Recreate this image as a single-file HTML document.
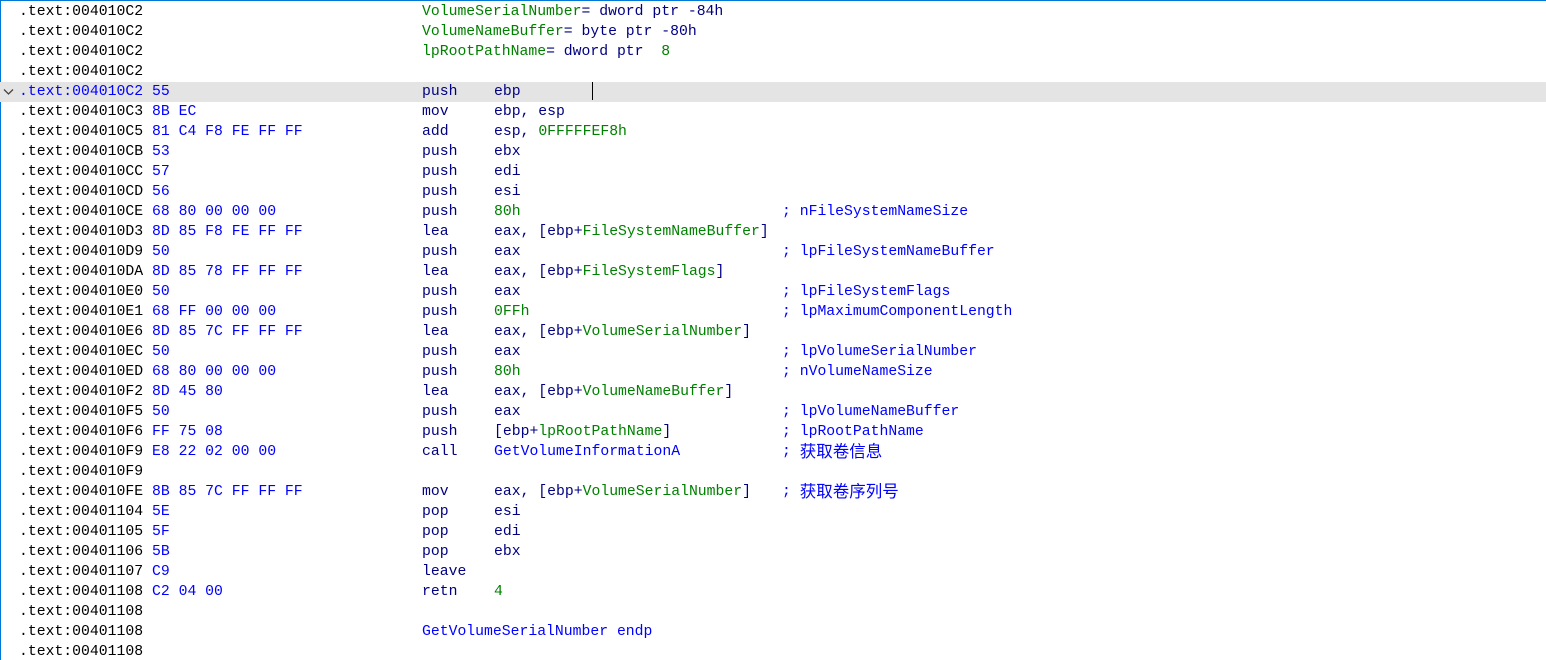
<!DOCTYPE html>
<html><head><meta charset="utf-8"><style>
html,body{margin:0;padding:0;background:#fff;width:1546px;height:660px;overflow:hidden}
body{position:relative;font-family:"Liberation Mono","Noto Sans CJK SC",monospace;font-size:14.78px}
.frame{position:absolute;left:0;top:0;width:1546px;height:660px;border-top:1px solid #0078d7;border-left:1px solid #0078d7;box-sizing:border-box}
.r{position:absolute;left:0;width:1546px;height:20px;line-height:20px;white-space:pre}
.r span{position:absolute;top:0}
.a{left:19px;color:#000}
.b{left:152px;color:#0000ff}
.m{left:422px;color:#000080}
.o{left:494px;color:#000080}
.c{left:782px;color:#0000ff}
.g{color:#008000}
.cj{position:relative!important;top:-2px!important;font-family:"Noto Sans CJK SC",sans-serif;font-size:16.5px;line-height:20px;vertical-align:top}
.hl{background:#e4e4e4}
.hl .a{color:#0000ff}
</style></head><body>
<div class="frame"></div>
<div class="r" style="top:2px"><span class="a">.text:004010C2</span><span class="m"><span style="position:static" class="g">VolumeSerialNumber</span>= dword ptr -84h</span></div>
<div class="r" style="top:22px"><span class="a">.text:004010C2</span><span class="m"><span style="position:static" class="g">VolumeNameBuffer</span>= byte ptr -80h</span></div>
<div class="r" style="top:42px"><span class="a">.text:004010C2</span><span class="m"><span style="position:static" class="g">lpRootPathName</span>= dword ptr  <span style="position:static" class="g">8</span></span></div>
<div class="r" style="top:62px"><span class="a">.text:004010C2</span></div>
<div class="r hl" style="top:82px"><svg style="position:absolute;left:3px;top:6px" width="11" height="8" viewBox="0 0 11 8"><path d="M1 1.5 L5.5 6 L10 1.5" fill="none" stroke="#444" stroke-width="1.3"/></svg><span class="a">.text:004010C2</span><span class="b">55</span><span class="m">push</span><span class="o">ebp</span><span style="left:592px;top:0;width:1px;height:18px;background:#000"></span></div>
<div class="r" style="top:102px"><span class="a">.text:004010C3</span><span class="b">8B EC</span><span class="m">mov</span><span class="o">ebp, esp</span></div>
<div class="r" style="top:122px"><span class="a">.text:004010C5</span><span class="b">81 C4 F8 FE FF FF</span><span class="m">add</span><span class="o">esp, <span style="position:static" class="g">0FFFFFEF8h</span></span></div>
<div class="r" style="top:142px"><span class="a">.text:004010CB</span><span class="b">53</span><span class="m">push</span><span class="o">ebx</span></div>
<div class="r" style="top:162px"><span class="a">.text:004010CC</span><span class="b">57</span><span class="m">push</span><span class="o">edi</span></div>
<div class="r" style="top:182px"><span class="a">.text:004010CD</span><span class="b">56</span><span class="m">push</span><span class="o">esi</span></div>
<div class="r" style="top:202px"><span class="a">.text:004010CE</span><span class="b">68 80 00 00 00</span><span class="m">push</span><span class="o g">80h</span><span class="c">; nFileSystemNameSize</span></div>
<div class="r" style="top:222px"><span class="a">.text:004010D3</span><span class="b">8D 85 F8 FE FF FF</span><span class="m">lea</span><span class="o">eax, [ebp+<span style="position:static" class="g">FileSystemNameBuffer</span>]</span></div>
<div class="r" style="top:242px"><span class="a">.text:004010D9</span><span class="b">50</span><span class="m">push</span><span class="o">eax</span><span class="c">; lpFileSystemNameBuffer</span></div>
<div class="r" style="top:262px"><span class="a">.text:004010DA</span><span class="b">8D 85 78 FF FF FF</span><span class="m">lea</span><span class="o">eax, [ebp+<span style="position:static" class="g">FileSystemFlags</span>]</span></div>
<div class="r" style="top:282px"><span class="a">.text:004010E0</span><span class="b">50</span><span class="m">push</span><span class="o">eax</span><span class="c">; lpFileSystemFlags</span></div>
<div class="r" style="top:302px"><span class="a">.text:004010E1</span><span class="b">68 FF 00 00 00</span><span class="m">push</span><span class="o g">0FFh</span><span class="c">; lpMaximumComponentLength</span></div>
<div class="r" style="top:322px"><span class="a">.text:004010E6</span><span class="b">8D 85 7C FF FF FF</span><span class="m">lea</span><span class="o">eax, [ebp+<span style="position:static" class="g">VolumeSerialNumber</span>]</span></div>
<div class="r" style="top:342px"><span class="a">.text:004010EC</span><span class="b">50</span><span class="m">push</span><span class="o">eax</span><span class="c">; lpVolumeSerialNumber</span></div>
<div class="r" style="top:362px"><span class="a">.text:004010ED</span><span class="b">68 80 00 00 00</span><span class="m">push</span><span class="o g">80h</span><span class="c">; nVolumeNameSize</span></div>
<div class="r" style="top:382px"><span class="a">.text:004010F2</span><span class="b">8D 45 80</span><span class="m">lea</span><span class="o">eax, [ebp+<span style="position:static" class="g">VolumeNameBuffer</span>]</span></div>
<div class="r" style="top:402px"><span class="a">.text:004010F5</span><span class="b">50</span><span class="m">push</span><span class="o">eax</span><span class="c">; lpVolumeNameBuffer</span></div>
<div class="r" style="top:422px"><span class="a">.text:004010F6</span><span class="b">FF 75 08</span><span class="m">push</span><span class="o">[ebp+<span style="position:static" class="g">lpRootPathName</span>]</span><span class="c">; lpRootPathName</span></div>
<div class="r" style="top:442px"><span class="a">.text:004010F9</span><span class="b">E8 22 02 00 00</span><span class="m">call</span><span class="o" style="color:#0000ff">GetVolumeInformationA</span><span class="c">; <span class="cj">获取卷信息</span></span></div>
<div class="r" style="top:462px"><span class="a">.text:004010F9</span></div>
<div class="r" style="top:482px"><span class="a">.text:004010FE</span><span class="b">8B 85 7C FF FF FF</span><span class="m">mov</span><span class="o">eax, [ebp+<span style="position:static" class="g">VolumeSerialNumber</span>]</span><span class="c">; <span class="cj">获取卷序列号</span></span></div>
<div class="r" style="top:502px"><span class="a">.text:00401104</span><span class="b">5E</span><span class="m">pop</span><span class="o">esi</span></div>
<div class="r" style="top:522px"><span class="a">.text:00401105</span><span class="b">5F</span><span class="m">pop</span><span class="o">edi</span></div>
<div class="r" style="top:542px"><span class="a">.text:00401106</span><span class="b">5B</span><span class="m">pop</span><span class="o">ebx</span></div>
<div class="r" style="top:562px"><span class="a">.text:00401107</span><span class="b">C9</span><span class="m">leave</span></div>
<div class="r" style="top:582px"><span class="a">.text:00401108</span><span class="b">C2 04 00</span><span class="m">retn</span><span class="o g">4</span></div>
<div class="r" style="top:602px"><span class="a">.text:00401108</span></div>
<div class="r" style="top:622px"><span class="a">.text:00401108</span><span class="m" style="color:#0000ff">GetVolumeSerialNumber endp</span></div>
<div class="r" style="top:642px"><span class="a">.text:00401108</span></div>
</body></html>
